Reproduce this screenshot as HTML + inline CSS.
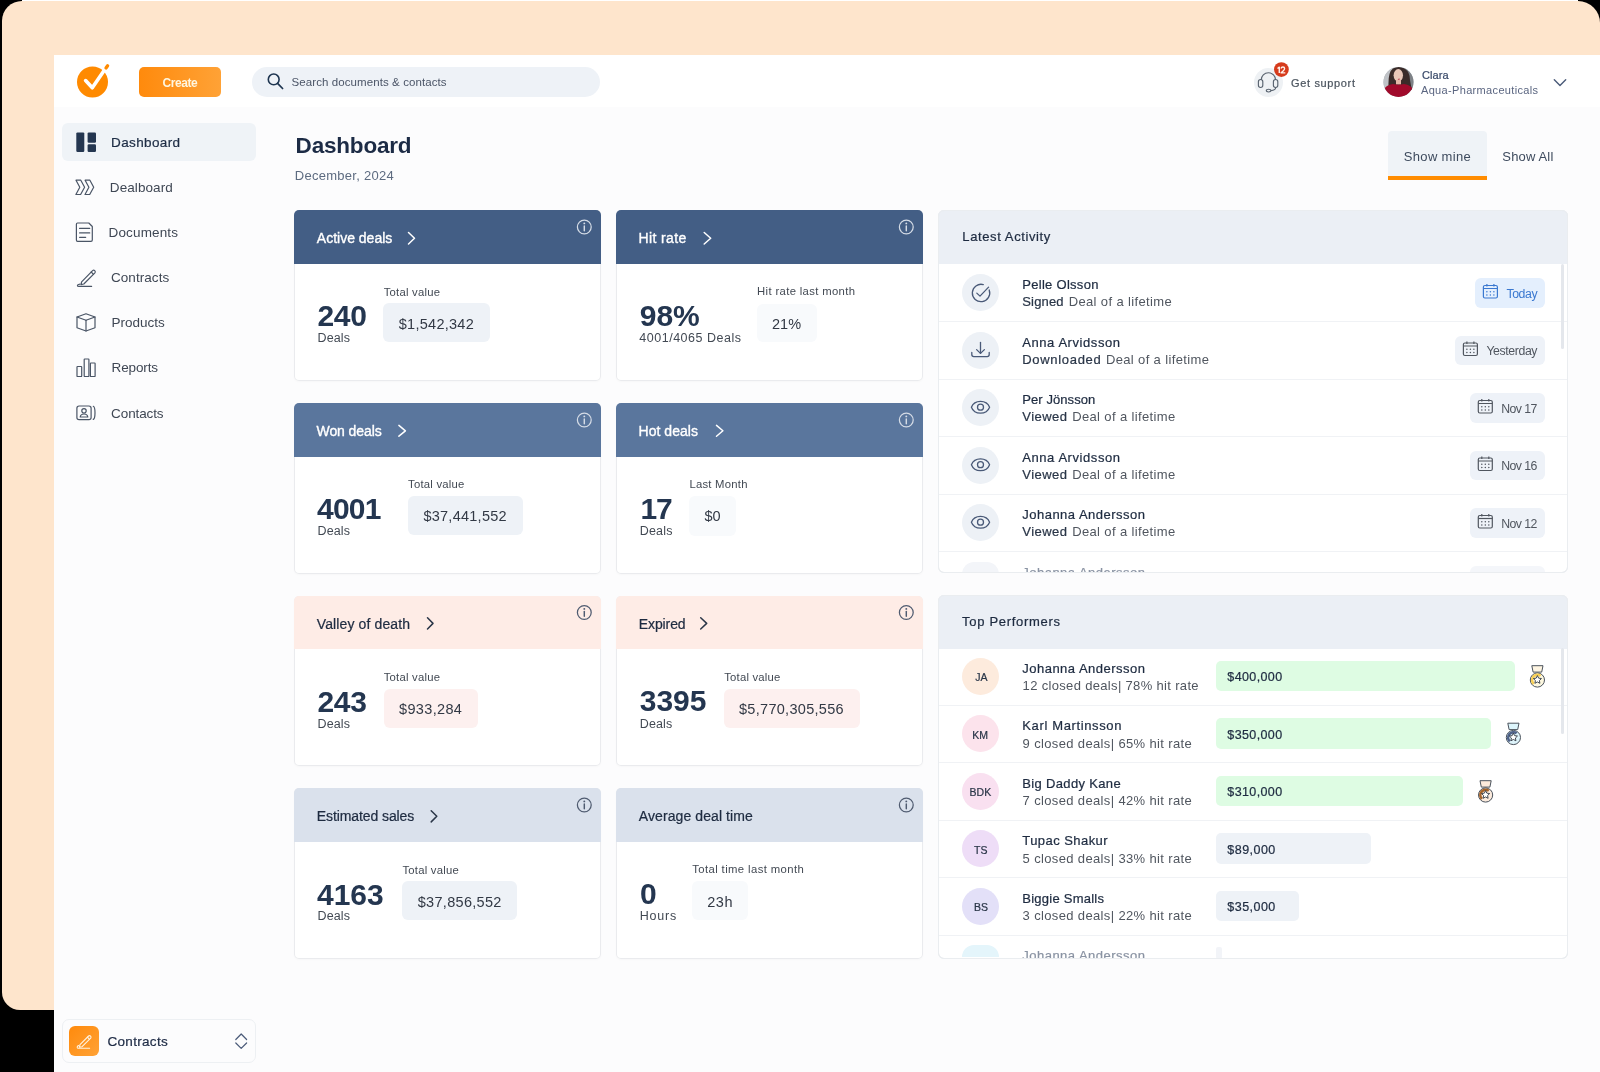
<!DOCTYPE html><html><head><meta charset="utf-8"><title>Dashboard</title><style>
html,body{margin:0;padding:0}
body{width:1600px;height:1072px;overflow:hidden;position:relative;background:#000;font-family:"Liberation Sans",sans-serif}
</style></head><body><div id="root" style="position:absolute;left:0;top:0;width:1600px;height:1072px;overflow:hidden;will-change:transform">
<div style="position:absolute;left:22.00px;top:0.00px;width:1556.00px;height:1.00px;background:#FFFFFF;border-radius:0px;"></div>
<div style="position:absolute;left:2.00px;top:1.00px;width:1598.00px;height:1009.00px;background:#FEE5CC;border-radius:20px 22px 0 18px;"></div>
<div style="position:absolute;left:54.00px;top:55.00px;width:1546.00px;height:1017.00px;background:#FCFCFD;border-radius:0px;"></div>
<div style="position:absolute;left:54.00px;top:55.00px;width:1546.00px;height:52.00px;background:#FFFFFF;border-radius:0px;"></div>
<svg style="position:absolute;left:0;top:0;" width="1600" height="1072" viewBox="0 0 1600 1072" fill="none"><circle cx="92.5" cy="82" r="15.5" fill="#FF8A00"/>
<polyline points="85.6,80.6 92.3,87.8 103.6,71.2" stroke="#fff" stroke-width="3.6" stroke-linecap="round" stroke-linejoin="round"/>
<line x1="103.6" y1="71.2" x2="104.7" y2="69.6" stroke="#fff" stroke-width="3.6"/>
<line x1="106" y1="68" x2="107.6" y2="65.8" stroke="#FF8A00" stroke-width="3.3" stroke-linecap="round"/></svg>
<div style="position:absolute;left:139px;top:67px;width:82px;height:30px;border-radius:5px;background:linear-gradient(90deg,#FF8A0C,#FFA236)"></div>
<span style="position:absolute;left:162.50px;top:77.18px;font-size:12.00px;line-height:1;white-space:nowrap;color:#FFF6DF;font-weight:bold;letter-spacing:-0.416px;">Create</span>
<div style="position:absolute;left:252.00px;top:67.00px;width:348.00px;height:30.00px;background:#EEF2F7;border-radius:15px;"></div>
<svg style="position:absolute;left:0;top:0;" width="1600" height="1072" viewBox="0 0 1600 1072" fill="none"><circle cx="273.7" cy="79.4" r="5.4" stroke="#1E3550" stroke-width="1.6"/>
<line x1="277.6" y1="83.4" x2="282.6" y2="88.5" stroke="#1E3550" stroke-width="1.7" stroke-linecap="round"/></svg>
<span style="position:absolute;left:291.60px;top:77.40px;font-size:11.50px;line-height:1;white-space:nowrap;color:#4B5567;letter-spacing:0.085px;">Search documents &amp; contacts</span>
<div style="position:absolute;left:1253.5px;top:67.5px;width:29px;height:29px;border-radius:50%;background:#EEF1F4"></div>
<svg style="position:absolute;left:0;top:0;" width="1600" height="1072" viewBox="0 0 1600 1072" fill="none"><path d="M1261.2 80 A7.2 7.2 0 0 1 1275.6 80" stroke="#5A6470" stroke-width="1.15"/>
<rect x="1258.4" y="79.5" width="4.4" height="8" rx="2.2" stroke="#5A6470" stroke-width="1.15"/>
<rect x="1273.4" y="79.5" width="4.4" height="8" rx="2.2" stroke="#5A6470" stroke-width="1.15"/>
<path d="M1275.8 87.3 Q1275.5 90.6 1271 90.6" stroke="#5A6470" stroke-width="1.1"/>
<ellipse cx="1268.6" cy="90.6" rx="2.3" ry="1.35" stroke="#5A6470" stroke-width="1.1"/>
<circle cx="1281.4" cy="69.6" r="7.4" fill="#D63B1C"/>
<path d="M1277.5 68.5 L1279.3 67.2 V72.9" stroke="#FFF1EA" stroke-width="1.45" fill="none" stroke-linejoin="round"/>
<path d="M1281 68.5 Q1281.3 67 1282.9 67 Q1284.6 67 1284.6 68.6 Q1284.6 69.6 1283.4 70.7 L1281.1 72.8 H1285.3" stroke="#FFF1EA" stroke-width="1.35" fill="none" stroke-linejoin="round"/></svg>
<span style="position:absolute;left:1291.00px;top:77.81px;font-size:11.00px;line-height:1;white-space:nowrap;color:#4D5660;-webkit-text-stroke:0.22px #4D5660;letter-spacing:0.652px;">Get support</span>
<svg style="position:absolute;left:0;top:0;" width="1600" height="1072" viewBox="0 0 1600 1072" fill="none"><defs><clipPath id="av"><circle cx="1398.5" cy="82" r="15"/></clipPath></defs>
<g clip-path="url(#av)">
<rect x="1383" y="66" width="31" height="32" fill="#A4A8AD"/>
<rect x="1383" y="66" width="9" height="32" fill="#BFC2C6"/>
<rect x="1405" y="66" width="9" height="32" fill="#7E8287"/>
<path d="M1388.5 86 Q1388 72 1393 68.5 Q1399 65.5 1404.5 68.5 Q1410 72 1410 80 Q1411 86 1412 90 L1386 90 Z" fill="#3A2B29"/>
<ellipse cx="1398.3" cy="75.3" rx="4.7" ry="6.2" fill="#E9C7B8"/>
<rect x="1396" y="80" width="5" height="4.5" fill="#E3B9A8"/>
<path d="M1398.2 78.8 Q1398.5 79.8 1399.6 78.8" stroke="#C0505E" stroke-width="1.2"/>
<path d="M1383 98 V91 Q1386 84.5 1393 84 Q1398.5 85.5 1404 84 Q1411.5 85 1414 91 V98 Z" fill="#A00A2B"/>
</g></svg>
<span style="position:absolute;left:1422.00px;top:70.22px;font-size:11.00px;line-height:1;white-space:nowrap;color:#3A4A6A;-webkit-text-stroke:0.22px #3A4A6A;letter-spacing:0.114px;">Clara</span>
<span style="position:absolute;left:1421.00px;top:85.22px;font-size:11.00px;line-height:1;white-space:nowrap;color:#5A6580;letter-spacing:0.334px;">Aqua-Pharmaceuticals</span>
<svg style="position:absolute;left:0;top:0;" width="1600" height="1072" viewBox="0 0 1600 1072" fill="none"><polyline points="1554.3,79.8 1560,85.5 1565.7,79.8" stroke="#4A5A78" stroke-width="1.4" stroke-linecap="round" stroke-linejoin="round"/></svg>
<div style="position:absolute;left:62.00px;top:123.00px;width:194.00px;height:38.00px;background:#EFF3F7;border-radius:6px;"></div>
<svg style="position:absolute;left:0;top:0;" width="1600" height="1072" viewBox="0 0 1600 1072" fill="none"><rect x="76.3" y="132.4" width="8" height="19.5" rx="1.2" fill="#243650"/>
<rect x="87.6" y="132.4" width="8.4" height="10.4" rx="1.2" fill="#243650"/>
<rect x="87.6" y="144.2" width="8.4" height="7.7" rx="1.2" fill="#243650"/></svg>
<span style="position:absolute;left:111.10px;top:135.83px;font-size:13.50px;line-height:1;white-space:nowrap;color:#1E2D45;-webkit-text-stroke:0.22px #1E2D45;letter-spacing:0.373px;">Dashboard</span>
<span style="position:absolute;left:109.80px;top:181.13px;font-size:13.50px;line-height:1;white-space:nowrap;color:#3F4754;letter-spacing:0.087px;">Dealboard</span>
<span style="position:absolute;left:108.60px;top:226.03px;font-size:13.50px;line-height:1;white-space:nowrap;color:#3F4754;letter-spacing:0.136px;">Documents</span>
<span style="position:absolute;left:111.00px;top:271.13px;font-size:13.50px;line-height:1;white-space:nowrap;color:#3F4754;letter-spacing:0.053px;">Contracts</span>
<span style="position:absolute;left:111.50px;top:316.33px;font-size:13.50px;line-height:1;white-space:nowrap;color:#3F4754;">Products</span>
<span style="position:absolute;left:111.50px;top:361.43px;font-size:13.50px;line-height:1;white-space:nowrap;color:#3F4754;letter-spacing:-0.108px;">Reports</span>
<span style="position:absolute;left:111.10px;top:406.53px;font-size:13.50px;line-height:1;white-space:nowrap;color:#3F4754;letter-spacing:-0.108px;">Contacts</span>
<svg style="position:absolute;left:0;top:0;" width="1600" height="1072" viewBox="0 0 1600 1072" fill="none"><g stroke="#4A5566" stroke-width="1.2" stroke-linejoin="round" stroke-linecap="round">
<path d="M76 180.2 H80.8 L84.6 187.3 L80.6 194.5 H75.9 L79.8 187.3 Z"/>
<path d="M85.1 180.2 H89.9 L93.7 187.3 L89.7 194.5 H85 L88.9 187.3 Z"/>
<path d="M77.5 223 H88.8 L92.3 226.5 V240 Q92.3 241.3 91 241.3 H77.5 Q76.4 241.3 76.4 240 V224.3 Q76.4 223 77.5 223 Z"/>
<line x1="79.6" y1="228.4" x2="89.7" y2="228.4"/><line x1="79.6" y1="232.9" x2="89.7" y2="232.9"/><line x1="79.6" y1="237.3" x2="85.7" y2="237.3"/>
<path d="M81.6 281.8 L92.6 270.6 A1.6 1.6 0 0 1 94.9 272.8 L83.8 284 L81 284.6 Z"/>
<line x1="91.2" y1="272" x2="93.5" y2="274.3"/>
<path d="M80 284.2 Q77.4 284.6 77.4 285.5 Q77.4 286.4 79 286.4 H91.6"/>
<path d="M86 313.8 L95 317 V327.8 L86 331 L77 327.8 V317 Z"/><path d="M77 317 L86 320.3 L95 317"/><line x1="86" y1="320.3" x2="86" y2="331"/>
<rect x="77" y="366.5" width="4.7" height="10" rx="0.6"/><rect x="84.2" y="359" width="4.7" height="17.5" rx="0.6"/><rect x="90.4" y="363" width="4.7" height="13.5" rx="0.6"/>
<rect x="76.9" y="406" width="14.2" height="13.7" rx="2.2"/>
<path d="M93.3 406.3 Q95 407 95 412.8 Q95 418.7 93.3 419.4"/>
<circle cx="84" cy="410.8" r="2.2"/><path d="M80.2 417 Q80.6 414 84 414 Q87.4 414 87.8 417 Z"/>
</g></svg>
<span style="position:absolute;left:295.60px;top:134.61px;font-size:22.50px;line-height:1;white-space:nowrap;color:#1C2B45;font-weight:bold;letter-spacing:-0.195px;">Dashboard</span>
<span style="position:absolute;left:294.75px;top:168.84px;font-size:13.00px;line-height:1;white-space:nowrap;color:#5D6B80;letter-spacing:0.275px;">December, 2024</span>
<div style="position:absolute;left:1388px;top:131px;width:99px;height:45px;border-radius:4px 4px 0 0;background:#EFF3F7"></div>
<div style="position:absolute;left:1388.00px;top:176.00px;width:99.00px;height:3.80px;background:#FF8C00;border-radius:0px;"></div>
<span style="position:absolute;left:1403.75px;top:149.75px;font-size:13.00px;line-height:1;white-space:nowrap;color:#3E4B5E;letter-spacing:0.339px;">Show mine</span>
<span style="position:absolute;left:1502.30px;top:149.75px;font-size:13.00px;line-height:1;white-space:nowrap;color:#3E4B5E;letter-spacing:0.164px;">Show All</span>
<div style="position:absolute;left:294.00px;top:210.00px;width:307.2px;height:170.5px;border-radius:5px;background:#fff;box-shadow:inset 0 0 0 1px #EAEBEE,0 1px 2px rgba(0,0,0,0.025)"><div style="position:absolute;left:0;top:0;right:0;height:53.5px;border-radius:5px 5px 0 0;background:#435E85"></div></div>
<span style="position:absolute;left:316.80px;top:231.31px;font-size:14.00px;line-height:1;white-space:nowrap;color:#FFFFFF;-webkit-text-stroke:0.22px #FFFFFF;-webkit-text-stroke:0.35px #FFFFFF;">Active deals</span>
<svg style="position:absolute;left:0;top:0;" width="1600" height="1072" viewBox="0 0 1600 1072" fill="none"><polyline points="408.50,232.50 414.50,238.25 408.50,244.00" stroke="#FFFFFF" stroke-width="1.5" stroke-linecap="round" stroke-linejoin="round"/></svg>
<svg style="position:absolute;left:0;top:0;" width="1600" height="1072" viewBox="0 0 1600 1072" fill="none"><circle cx="584.30" cy="227.00" r="6.9" stroke="#D5DCE6" stroke-width="1.25"/><line x1="584.30" y1="226.00" x2="584.30" y2="230.70" stroke="#D5DCE6" stroke-width="1.45" stroke-linecap="round"/><circle cx="584.30" cy="223.40" r="0.95" fill="#D5DCE6"/></svg>
<span style="position:absolute;left:317.50px;top:301.20px;font-size:30.00px;line-height:1;white-space:nowrap;color:#243650;font-weight:bold;letter-spacing:-0.350px;">240</span>
<span style="position:absolute;left:317.50px;top:332.06px;font-size:12.50px;line-height:1;white-space:nowrap;color:#424953;letter-spacing:0.141px;">Deals</span>
<span style="position:absolute;left:383.75px;top:287.16px;font-size:11.30px;line-height:1;white-space:nowrap;color:#424953;letter-spacing:0.219px;">Total value</span>
<div style="position:absolute;left:383.00px;top:303.10px;width:107.00px;height:38.80px;background:#EEF2F7;border-radius:6px;"></div>
<span style="position:absolute;left:398.75px;top:316.64px;font-size:14.50px;line-height:1;white-space:nowrap;color:#323945;letter-spacing:0.270px;">$1,542,342</span>
<div style="position:absolute;left:616.00px;top:210.00px;width:307.2px;height:170.5px;border-radius:5px;background:#fff;box-shadow:inset 0 0 0 1px #EAEBEE,0 1px 2px rgba(0,0,0,0.025)"><div style="position:absolute;left:0;top:0;right:0;height:53.5px;border-radius:5px 5px 0 0;background:#435E85"></div></div>
<span style="position:absolute;left:638.50px;top:231.31px;font-size:14.00px;line-height:1;white-space:nowrap;color:#FFFFFF;-webkit-text-stroke:0.22px #FFFFFF;letter-spacing:0.364px;-webkit-text-stroke:0.35px #FFFFFF;">Hit rate</span>
<svg style="position:absolute;left:0;top:0;" width="1600" height="1072" viewBox="0 0 1600 1072" fill="none"><polyline points="704.20,232.50 710.70,238.25 704.20,244.00" stroke="#FFFFFF" stroke-width="1.5" stroke-linecap="round" stroke-linejoin="round"/></svg>
<svg style="position:absolute;left:0;top:0;" width="1600" height="1072" viewBox="0 0 1600 1072" fill="none"><circle cx="906.30" cy="227.00" r="6.9" stroke="#D5DCE6" stroke-width="1.25"/><line x1="906.30" y1="226.00" x2="906.30" y2="230.70" stroke="#D5DCE6" stroke-width="1.45" stroke-linecap="round"/><circle cx="906.30" cy="223.40" r="0.95" fill="#D5DCE6"/></svg>
<span style="position:absolute;left:639.75px;top:300.65px;font-size:30.00px;line-height:1;white-space:nowrap;color:#243650;font-weight:bold;">98%</span>
<span style="position:absolute;left:639.30px;top:331.76px;font-size:12.50px;line-height:1;white-space:nowrap;color:#424953;letter-spacing:0.514px;">4001/4065 Deals</span>
<span style="position:absolute;left:757.10px;top:286.26px;font-size:11.30px;line-height:1;white-space:nowrap;color:#424953;letter-spacing:0.344px;">Hit rate last month</span>
<div style="position:absolute;left:756.70px;top:304.00px;width:60.00px;height:37.50px;background:#F8FAFC;border-radius:6px;"></div>
<span style="position:absolute;left:772.00px;top:316.59px;font-size:14.50px;line-height:1;white-space:nowrap;color:#323945;">21%</span>
<div style="position:absolute;left:294.00px;top:403.00px;width:307.2px;height:170.5px;border-radius:5px;background:#fff;box-shadow:inset 0 0 0 1px #EAEBEE,0 1px 2px rgba(0,0,0,0.025)"><div style="position:absolute;left:0;top:0;right:0;height:53.5px;border-radius:5px 5px 0 0;background:#5A769D"></div></div>
<span style="position:absolute;left:316.50px;top:424.31px;font-size:14.00px;line-height:1;white-space:nowrap;color:#FFFFFF;-webkit-text-stroke:0.22px #FFFFFF;letter-spacing:-0.084px;-webkit-text-stroke:0.35px #FFFFFF;">Won deals</span>
<svg style="position:absolute;left:0;top:0;" width="1600" height="1072" viewBox="0 0 1600 1072" fill="none"><polyline points="398.90,425.40 405.40,430.80 398.90,436.20" stroke="#FFFFFF" stroke-width="1.5" stroke-linecap="round" stroke-linejoin="round"/></svg>
<svg style="position:absolute;left:0;top:0;" width="1600" height="1072" viewBox="0 0 1600 1072" fill="none"><circle cx="584.30" cy="420.00" r="6.9" stroke="#D5DCE6" stroke-width="1.25"/><line x1="584.30" y1="419.00" x2="584.30" y2="423.70" stroke="#D5DCE6" stroke-width="1.45" stroke-linecap="round"/><circle cx="584.30" cy="416.40" r="0.95" fill="#D5DCE6"/></svg>
<span style="position:absolute;left:317.00px;top:494.45px;font-size:30.00px;line-height:1;white-space:nowrap;color:#243650;font-weight:bold;letter-spacing:-0.750px;">4001</span>
<span style="position:absolute;left:317.50px;top:524.76px;font-size:12.50px;line-height:1;white-space:nowrap;color:#424953;letter-spacing:0.141px;">Deals</span>
<span style="position:absolute;left:408.10px;top:478.86px;font-size:11.30px;line-height:1;white-space:nowrap;color:#424953;letter-spacing:0.219px;">Total value</span>
<div style="position:absolute;left:408.00px;top:495.80px;width:115.00px;height:39.00px;background:#EEF2F7;border-radius:6px;"></div>
<span style="position:absolute;left:423.40px;top:508.89px;font-size:14.50px;line-height:1;white-space:nowrap;color:#323945;letter-spacing:0.258px;">$37,441,552</span>
<div style="position:absolute;left:616.00px;top:403.00px;width:307.2px;height:170.5px;border-radius:5px;background:#fff;box-shadow:inset 0 0 0 1px #EAEBEE,0 1px 2px rgba(0,0,0,0.025)"><div style="position:absolute;left:0;top:0;right:0;height:53.5px;border-radius:5px 5px 0 0;background:#5A769D"></div></div>
<span style="position:absolute;left:638.50px;top:424.31px;font-size:14.00px;line-height:1;white-space:nowrap;color:#FFFFFF;-webkit-text-stroke:0.22px #FFFFFF;letter-spacing:0.044px;-webkit-text-stroke:0.35px #FFFFFF;">Hot deals</span>
<svg style="position:absolute;left:0;top:0;" width="1600" height="1072" viewBox="0 0 1600 1072" fill="none"><polyline points="716.50,425.40 722.90,430.80 716.50,436.20" stroke="#FFFFFF" stroke-width="1.5" stroke-linecap="round" stroke-linejoin="round"/></svg>
<svg style="position:absolute;left:0;top:0;" width="1600" height="1072" viewBox="0 0 1600 1072" fill="none"><circle cx="906.30" cy="420.00" r="6.9" stroke="#D5DCE6" stroke-width="1.25"/><line x1="906.30" y1="419.00" x2="906.30" y2="423.70" stroke="#D5DCE6" stroke-width="1.45" stroke-linecap="round"/><circle cx="906.30" cy="416.40" r="0.95" fill="#D5DCE6"/></svg>
<span style="position:absolute;left:640.60px;top:494.35px;font-size:30.00px;line-height:1;white-space:nowrap;color:#243650;font-weight:bold;letter-spacing:-1.400px;">17</span>
<span style="position:absolute;left:639.75px;top:524.81px;font-size:12.50px;line-height:1;white-space:nowrap;color:#424953;letter-spacing:0.191px;">Deals</span>
<span style="position:absolute;left:689.40px;top:479.31px;font-size:11.30px;line-height:1;white-space:nowrap;color:#424953;letter-spacing:0.247px;">Last Month</span>
<div style="position:absolute;left:688.75px;top:495.60px;width:47.50px;height:40.00px;background:#F8FAFC;border-radius:6px;"></div>
<span style="position:absolute;left:704.40px;top:509.14px;font-size:14.50px;line-height:1;white-space:nowrap;color:#323945;letter-spacing:0.105px;">$0</span>
<div style="position:absolute;left:294.00px;top:595.50px;width:307.2px;height:170.5px;border-radius:5px;background:#fff;box-shadow:inset 0 0 0 1px #EAEBEE,0 1px 2px rgba(0,0,0,0.025)"><div style="position:absolute;left:0;top:0;right:0;height:53.5px;border-radius:5px 5px 0 0;background:#FEECE6"></div></div>
<span style="position:absolute;left:316.80px;top:616.81px;font-size:14.00px;line-height:1;white-space:nowrap;color:#1E2B40;-webkit-text-stroke:0.22px #1E2B40;letter-spacing:0.117px;">Valley of death</span>
<svg style="position:absolute;left:0;top:0;" width="1600" height="1072" viewBox="0 0 1600 1072" fill="none"><polyline points="427.50,617.80 433.00,623.40 427.50,629.00" stroke="#2A3648" stroke-width="1.5" stroke-linecap="round" stroke-linejoin="round"/></svg>
<svg style="position:absolute;left:0;top:0;" width="1600" height="1072" viewBox="0 0 1600 1072" fill="none"><circle cx="584.30" cy="612.50" r="6.9" stroke="#4F5B70" stroke-width="1.25"/><line x1="584.30" y1="611.50" x2="584.30" y2="616.20" stroke="#4F5B70" stroke-width="1.45" stroke-linecap="round"/><circle cx="584.30" cy="608.90" r="0.95" fill="#4F5B70"/></svg>
<span style="position:absolute;left:317.50px;top:686.85px;font-size:30.00px;line-height:1;white-space:nowrap;color:#243650;font-weight:bold;letter-spacing:-0.350px;">243</span>
<span style="position:absolute;left:317.50px;top:717.56px;font-size:12.50px;line-height:1;white-space:nowrap;color:#424953;letter-spacing:0.141px;">Deals</span>
<span style="position:absolute;left:383.75px;top:671.81px;font-size:11.30px;line-height:1;white-space:nowrap;color:#424953;letter-spacing:0.219px;">Total value</span>
<div style="position:absolute;left:383.50px;top:688.75px;width:94.50px;height:39.25px;background:#FDF0EF;border-radius:6px;"></div>
<span style="position:absolute;left:399.00px;top:702.29px;font-size:14.50px;line-height:1;white-space:nowrap;color:#323945;letter-spacing:0.348px;">$933,284</span>
<div style="position:absolute;left:616.00px;top:595.50px;width:307.2px;height:170.5px;border-radius:5px;background:#fff;box-shadow:inset 0 0 0 1px #EAEBEE,0 1px 2px rgba(0,0,0,0.025)"><div style="position:absolute;left:0;top:0;right:0;height:53.5px;border-radius:5px 5px 0 0;background:#FEECE6"></div></div>
<span style="position:absolute;left:638.80px;top:616.81px;font-size:14.00px;line-height:1;white-space:nowrap;color:#1E2B40;-webkit-text-stroke:0.22px #1E2B40;letter-spacing:-0.110px;">Expired</span>
<svg style="position:absolute;left:0;top:0;" width="1600" height="1072" viewBox="0 0 1600 1072" fill="none"><polyline points="700.70,617.80 706.70,623.40 700.70,629.00" stroke="#2A3648" stroke-width="1.5" stroke-linecap="round" stroke-linejoin="round"/></svg>
<svg style="position:absolute;left:0;top:0;" width="1600" height="1072" viewBox="0 0 1600 1072" fill="none"><circle cx="906.30" cy="612.50" r="6.9" stroke="#4F5B70" stroke-width="1.25"/><line x1="906.30" y1="611.50" x2="906.30" y2="616.20" stroke="#4F5B70" stroke-width="1.45" stroke-linecap="round"/><circle cx="906.30" cy="608.90" r="0.95" fill="#4F5B70"/></svg>
<span style="position:absolute;left:639.75px;top:685.95px;font-size:30.00px;line-height:1;white-space:nowrap;color:#243650;font-weight:bold;">3395</span>
<span style="position:absolute;left:639.75px;top:717.76px;font-size:12.50px;line-height:1;white-space:nowrap;color:#424953;letter-spacing:0.141px;">Deals</span>
<span style="position:absolute;left:724.20px;top:671.56px;font-size:11.30px;line-height:1;white-space:nowrap;color:#424953;letter-spacing:0.219px;">Total value</span>
<div style="position:absolute;left:723.70px;top:688.50px;width:136.30px;height:39.00px;background:#FDF0EF;border-radius:6px;"></div>
<span style="position:absolute;left:739.00px;top:701.89px;font-size:14.50px;line-height:1;white-space:nowrap;color:#323945;letter-spacing:0.294px;">$5,770,305,556</span>
<div style="position:absolute;left:294.00px;top:788.00px;width:307.2px;height:170.5px;border-radius:5px;background:#fff;box-shadow:inset 0 0 0 1px #EAEBEE,0 1px 2px rgba(0,0,0,0.025)"><div style="position:absolute;left:0;top:0;right:0;height:53.5px;border-radius:5px 5px 0 0;background:#DAE1EC"></div></div>
<span style="position:absolute;left:316.80px;top:809.31px;font-size:14.00px;line-height:1;white-space:nowrap;color:#1E2B40;-webkit-text-stroke:0.22px #1E2B40;letter-spacing:-0.096px;">Estimated sales</span>
<svg style="position:absolute;left:0;top:0;" width="1600" height="1072" viewBox="0 0 1600 1072" fill="none"><polyline points="431.20,810.70 436.80,816.30 431.20,821.90" stroke="#2A3648" stroke-width="1.5" stroke-linecap="round" stroke-linejoin="round"/></svg>
<svg style="position:absolute;left:0;top:0;" width="1600" height="1072" viewBox="0 0 1600 1072" fill="none"><circle cx="584.30" cy="805.00" r="6.9" stroke="#4F5B70" stroke-width="1.25"/><line x1="584.30" y1="804.00" x2="584.30" y2="808.70" stroke="#4F5B70" stroke-width="1.45" stroke-linecap="round"/><circle cx="584.30" cy="801.40" r="0.95" fill="#4F5B70"/></svg>
<span style="position:absolute;left:317.00px;top:879.65px;font-size:30.00px;line-height:1;white-space:nowrap;color:#243650;font-weight:bold;letter-spacing:-0.017px;">4163</span>
<span style="position:absolute;left:317.50px;top:910.06px;font-size:12.50px;line-height:1;white-space:nowrap;color:#424953;letter-spacing:0.141px;">Deals</span>
<span style="position:absolute;left:402.50px;top:864.56px;font-size:11.30px;line-height:1;white-space:nowrap;color:#424953;letter-spacing:0.219px;">Total value</span>
<div style="position:absolute;left:402.20px;top:880.70px;width:114.80px;height:39.00px;background:#EEF2F7;border-radius:6px;"></div>
<span style="position:absolute;left:417.70px;top:894.89px;font-size:14.50px;line-height:1;white-space:nowrap;color:#323945;letter-spacing:0.308px;">$37,856,552</span>
<div style="position:absolute;left:616.00px;top:788.00px;width:307.2px;height:170.5px;border-radius:5px;background:#fff;box-shadow:inset 0 0 0 1px #EAEBEE,0 1px 2px rgba(0,0,0,0.025)"><div style="position:absolute;left:0;top:0;right:0;height:53.5px;border-radius:5px 5px 0 0;background:#DAE1EC"></div></div>
<span style="position:absolute;left:638.80px;top:809.31px;font-size:14.00px;line-height:1;white-space:nowrap;color:#1E2B40;-webkit-text-stroke:0.22px #1E2B40;letter-spacing:0.090px;">Average deal time</span>
<svg style="position:absolute;left:0;top:0;" width="1600" height="1072" viewBox="0 0 1600 1072" fill="none"><circle cx="906.30" cy="805.00" r="6.9" stroke="#4F5B70" stroke-width="1.25"/><line x1="906.30" y1="804.00" x2="906.30" y2="808.70" stroke="#4F5B70" stroke-width="1.45" stroke-linecap="round"/><circle cx="906.30" cy="801.40" r="0.95" fill="#4F5B70"/></svg>
<span style="position:absolute;left:640.00px;top:879.35px;font-size:30.00px;line-height:1;white-space:nowrap;color:#243650;font-weight:bold;">0</span>
<span style="position:absolute;left:639.75px;top:910.16px;font-size:12.50px;line-height:1;white-space:nowrap;color:#424953;letter-spacing:0.781px;">Hours</span>
<span style="position:absolute;left:692.25px;top:864.31px;font-size:11.30px;line-height:1;white-space:nowrap;color:#424953;letter-spacing:0.394px;">Total time last month</span>
<div style="position:absolute;left:691.90px;top:880.60px;width:56.10px;height:39.40px;background:#F8FAFC;border-radius:6px;"></div>
<span style="position:absolute;left:707.25px;top:894.79px;font-size:14.50px;line-height:1;white-space:nowrap;color:#323945;letter-spacing:0.518px;">23h</span>
<div style="position:absolute;left:938.00px;top:209.50px;width:630px;height:363.50px;border-radius:6px;background:#fff;box-shadow:inset 0 0 0 1px #EAEDF0"><div style="position:absolute;left:0;top:0;right:0;height:54.00px;border-radius:6px 6px 0 0;background:#EBEFF5"></div></div>
<span style="position:absolute;left:962.30px;top:230.15px;font-size:13.00px;line-height:1;white-space:nowrap;color:#1E2B40;-webkit-text-stroke:0.22px #1E2B40;letter-spacing:0.607px;">Latest Activity</span>
<div style="position:absolute;left:0;top:0;width:1600px;height:1072px;clip-path:inset(263.5px 32px 499px 938px round 0 0 6px 6px)">
<div style="position:absolute;left:939.00px;top:321.00px;width:628px;height:1px;background:#F0F2F5"></div>
<div style="position:absolute;left:961.5px;top:274.00px;width:37px;height:37px;border-radius:50%;background:#EDF1F6"></div>
<svg style="position:absolute;left:0;top:0;" width="1600" height="1072" viewBox="0 0 1600 1072" fill="none"><g stroke="#4A5A78" stroke-width="1.3" stroke-linecap="round" stroke-linejoin="round"><path d="M989.2 290.00 A8.7 8.7 0 1 1 983.3 284.60"/><polyline points="976.8,293.10 980,296.10 988.6,287.10"/></g></svg>
<span style="position:absolute;left:1022.30px;top:278.14px;font-size:13.00px;line-height:1;white-space:nowrap;color:#1E2B40;-webkit-text-stroke:0.22px #1E2B40;letter-spacing:0.282px;">Pelle Olsson</span>
<span style="position:absolute;left:1022.30px;top:295.14px;font-size:13.00px;line-height:1;white-space:nowrap;color:#2A3648;-webkit-text-stroke:0.22px #2A3648;letter-spacing:0.141px;">Signed</span>
<span style="position:absolute;left:1068.70px;top:295.14px;font-size:13.00px;line-height:1;white-space:nowrap;color:#50565F;letter-spacing:0.362px;">Deal of a lifetime</span>
<div style="position:absolute;left:1475.40px;top:278.00px;width:69.60px;height:29.50px;background:#E4EFFD;border-radius:6px;"></div>
<svg style="position:absolute;left:0;top:0;" width="1600" height="1072" viewBox="0 0 1600 1072" fill="none"><g stroke="#3A78D0" stroke-width="1.2" fill="none"><rect x="1483.40" y="285.50" width="14" height="12.5" rx="1.5"/><line x1="1483.40" y1="288.50" x2="1497.40" y2="288.50"/><line x1="1486.90" y1="284.00" x2="1486.90" y2="286.50"/><line x1="1493.90" y1="284.00" x2="1493.90" y2="286.50"/></g><g fill="#3A78D0"><circle cx="1486.90" cy="291.70" r="0.75"/><circle cx="1490.40" cy="291.70" r="0.75"/><circle cx="1493.90" cy="291.70" r="0.75"/><circle cx="1486.90" cy="295.00" r="0.75"/><circle cx="1490.40" cy="295.00" r="0.75"/><circle cx="1493.90" cy="295.00" r="0.75"/></g></svg>
<span style="position:absolute;left:1506.40px;top:287.73px;font-size:12.30px;line-height:1;white-space:nowrap;color:#3A78D0;letter-spacing:-0.385px;">Today</span>
<div style="position:absolute;left:939.00px;top:378.50px;width:628px;height:1px;background:#F0F2F5"></div>
<div style="position:absolute;left:961.5px;top:331.50px;width:37px;height:37px;border-radius:50%;background:#EDF1F6"></div>
<svg style="position:absolute;left:0;top:0;" width="1600" height="1072" viewBox="0 0 1600 1072" fill="none"><g stroke="#4A5A78" stroke-width="1.3" stroke-linecap="round" stroke-linejoin="round"><line x1="980.5" y1="342.40" x2="980.5" y2="353.40"/><polyline points="976.6,349.60 980.5,353.40 984.4,349.60"/><path d="M971.8 352.40 V354.60 Q971.8 356.60 973.8 356.60 H987.2 Q989.2 356.60 989.2 354.60 V352.40"/></g></svg>
<span style="position:absolute;left:1022.30px;top:335.64px;font-size:13.00px;line-height:1;white-space:nowrap;color:#1E2B40;-webkit-text-stroke:0.22px #1E2B40;letter-spacing:0.565px;">Anna Arvidsson</span>
<span style="position:absolute;left:1022.30px;top:352.64px;font-size:13.00px;line-height:1;white-space:nowrap;color:#2A3648;-webkit-text-stroke:0.22px #2A3648;letter-spacing:0.680px;">Downloaded</span>
<span style="position:absolute;left:1105.90px;top:352.64px;font-size:13.00px;line-height:1;white-space:nowrap;color:#50565F;letter-spacing:0.362px;">Deal of a lifetime</span>
<div style="position:absolute;left:1455.40px;top:335.50px;width:89.60px;height:29.50px;background:#EEF2F8;border-radius:6px;"></div>
<svg style="position:absolute;left:0;top:0;" width="1600" height="1072" viewBox="0 0 1600 1072" fill="none"><g stroke="#50565F" stroke-width="1.2" fill="none"><rect x="1463.40" y="343.00" width="14" height="12.5" rx="1.5"/><line x1="1463.40" y1="346.00" x2="1477.40" y2="346.00"/><line x1="1466.90" y1="341.50" x2="1466.90" y2="344.00"/><line x1="1473.90" y1="341.50" x2="1473.90" y2="344.00"/></g><g fill="#50565F"><circle cx="1466.90" cy="349.20" r="0.75"/><circle cx="1470.40" cy="349.20" r="0.75"/><circle cx="1473.90" cy="349.20" r="0.75"/><circle cx="1466.90" cy="352.50" r="0.75"/><circle cx="1470.40" cy="352.50" r="0.75"/><circle cx="1473.90" cy="352.50" r="0.75"/></g></svg>
<span style="position:absolute;left:1486.40px;top:345.23px;font-size:12.30px;line-height:1;white-space:nowrap;color:#50565F;letter-spacing:-0.393px;">Yesterday</span>
<div style="position:absolute;left:939.00px;top:436.00px;width:628px;height:1px;background:#F0F2F5"></div>
<div style="position:absolute;left:961.5px;top:389.00px;width:37px;height:37px;border-radius:50%;background:#EDF1F6"></div>
<svg style="position:absolute;left:0;top:0;" width="1600" height="1072" viewBox="0 0 1600 1072" fill="none"><g stroke="#4A5A78" stroke-width="1.3" stroke-linecap="round" stroke-linejoin="round" stroke-width="1.15"><path d="M971.4 407.20 C974.5 399.30 986.5 399.30 989.6 407.20 C986.5 415.10 974.5 415.10 971.4 407.20 Z"/><circle cx="980.5" cy="407.20" r="3"/></g></svg>
<span style="position:absolute;left:1022.30px;top:393.14px;font-size:13.00px;line-height:1;white-space:nowrap;color:#1E2B40;-webkit-text-stroke:0.22px #1E2B40;letter-spacing:0.072px;">Per Jönsson</span>
<span style="position:absolute;left:1022.30px;top:410.14px;font-size:13.00px;line-height:1;white-space:nowrap;color:#2A3648;-webkit-text-stroke:0.22px #2A3648;letter-spacing:0.464px;">Viewed</span>
<span style="position:absolute;left:1072.20px;top:410.14px;font-size:13.00px;line-height:1;white-space:nowrap;color:#50565F;letter-spacing:0.362px;">Deal of a lifetime</span>
<div style="position:absolute;left:1470.30px;top:393.00px;width:74.70px;height:29.50px;background:#EEF2F8;border-radius:6px;"></div>
<svg style="position:absolute;left:0;top:0;" width="1600" height="1072" viewBox="0 0 1600 1072" fill="none"><g stroke="#50565F" stroke-width="1.2" fill="none"><rect x="1478.30" y="400.50" width="14" height="12.5" rx="1.5"/><line x1="1478.30" y1="403.50" x2="1492.30" y2="403.50"/><line x1="1481.80" y1="399.00" x2="1481.80" y2="401.50"/><line x1="1488.80" y1="399.00" x2="1488.80" y2="401.50"/></g><g fill="#50565F"><circle cx="1481.80" cy="406.70" r="0.75"/><circle cx="1485.30" cy="406.70" r="0.75"/><circle cx="1488.80" cy="406.70" r="0.75"/><circle cx="1481.80" cy="410.00" r="0.75"/><circle cx="1485.30" cy="410.00" r="0.75"/><circle cx="1488.80" cy="410.00" r="0.75"/></g></svg>
<span style="position:absolute;left:1501.30px;top:402.73px;font-size:12.30px;line-height:1;white-space:nowrap;color:#50565F;letter-spacing:-0.598px;">Nov 17</span>
<div style="position:absolute;left:939.00px;top:493.50px;width:628px;height:1px;background:#F0F2F5"></div>
<div style="position:absolute;left:961.5px;top:446.50px;width:37px;height:37px;border-radius:50%;background:#EDF1F6"></div>
<svg style="position:absolute;left:0;top:0;" width="1600" height="1072" viewBox="0 0 1600 1072" fill="none"><g stroke="#4A5A78" stroke-width="1.3" stroke-linecap="round" stroke-linejoin="round" stroke-width="1.15"><path d="M971.4 464.70 C974.5 456.80 986.5 456.80 989.6 464.70 C986.5 472.60 974.5 472.60 971.4 464.70 Z"/><circle cx="980.5" cy="464.70" r="3"/></g></svg>
<span style="position:absolute;left:1022.30px;top:450.64px;font-size:13.00px;line-height:1;white-space:nowrap;color:#1E2B40;-webkit-text-stroke:0.22px #1E2B40;letter-spacing:0.565px;">Anna Arvidsson</span>
<span style="position:absolute;left:1022.30px;top:467.64px;font-size:13.00px;line-height:1;white-space:nowrap;color:#2A3648;-webkit-text-stroke:0.22px #2A3648;letter-spacing:0.464px;">Viewed</span>
<span style="position:absolute;left:1072.20px;top:467.64px;font-size:13.00px;line-height:1;white-space:nowrap;color:#50565F;letter-spacing:0.362px;">Deal of a lifetime</span>
<div style="position:absolute;left:1470.30px;top:450.50px;width:74.70px;height:29.50px;background:#EEF2F8;border-radius:6px;"></div>
<svg style="position:absolute;left:0;top:0;" width="1600" height="1072" viewBox="0 0 1600 1072" fill="none"><g stroke="#50565F" stroke-width="1.2" fill="none"><rect x="1478.30" y="458.00" width="14" height="12.5" rx="1.5"/><line x1="1478.30" y1="461.00" x2="1492.30" y2="461.00"/><line x1="1481.80" y1="456.50" x2="1481.80" y2="459.00"/><line x1="1488.80" y1="456.50" x2="1488.80" y2="459.00"/></g><g fill="#50565F"><circle cx="1481.80" cy="464.20" r="0.75"/><circle cx="1485.30" cy="464.20" r="0.75"/><circle cx="1488.80" cy="464.20" r="0.75"/><circle cx="1481.80" cy="467.50" r="0.75"/><circle cx="1485.30" cy="467.50" r="0.75"/><circle cx="1488.80" cy="467.50" r="0.75"/></g></svg>
<span style="position:absolute;left:1501.30px;top:460.23px;font-size:12.30px;line-height:1;white-space:nowrap;color:#50565F;letter-spacing:-0.598px;">Nov 16</span>
<div style="position:absolute;left:939.00px;top:551.00px;width:628px;height:1px;background:#F0F2F5"></div>
<div style="position:absolute;left:961.5px;top:504.00px;width:37px;height:37px;border-radius:50%;background:#EDF1F6"></div>
<svg style="position:absolute;left:0;top:0;" width="1600" height="1072" viewBox="0 0 1600 1072" fill="none"><g stroke="#4A5A78" stroke-width="1.3" stroke-linecap="round" stroke-linejoin="round" stroke-width="1.15"><path d="M971.4 522.20 C974.5 514.30 986.5 514.30 989.6 522.20 C986.5 530.10 974.5 530.10 971.4 522.20 Z"/><circle cx="980.5" cy="522.20" r="3"/></g></svg>
<span style="position:absolute;left:1022.30px;top:508.14px;font-size:13.00px;line-height:1;white-space:nowrap;color:#1E2B40;-webkit-text-stroke:0.22px #1E2B40;letter-spacing:0.480px;">Johanna Andersson</span>
<span style="position:absolute;left:1022.30px;top:525.14px;font-size:13.00px;line-height:1;white-space:nowrap;color:#2A3648;-webkit-text-stroke:0.22px #2A3648;letter-spacing:0.464px;">Viewed</span>
<span style="position:absolute;left:1072.20px;top:525.14px;font-size:13.00px;line-height:1;white-space:nowrap;color:#50565F;letter-spacing:0.362px;">Deal of a lifetime</span>
<div style="position:absolute;left:1470.30px;top:508.00px;width:74.70px;height:29.50px;background:#EEF2F8;border-radius:6px;"></div>
<svg style="position:absolute;left:0;top:0;" width="1600" height="1072" viewBox="0 0 1600 1072" fill="none"><g stroke="#50565F" stroke-width="1.2" fill="none"><rect x="1478.30" y="515.50" width="14" height="12.5" rx="1.5"/><line x1="1478.30" y1="518.50" x2="1492.30" y2="518.50"/><line x1="1481.80" y1="514.00" x2="1481.80" y2="516.50"/><line x1="1488.80" y1="514.00" x2="1488.80" y2="516.50"/></g><g fill="#50565F"><circle cx="1481.80" cy="521.70" r="0.75"/><circle cx="1485.30" cy="521.70" r="0.75"/><circle cx="1488.80" cy="521.70" r="0.75"/><circle cx="1481.80" cy="525.00" r="0.75"/><circle cx="1485.30" cy="525.00" r="0.75"/><circle cx="1488.80" cy="525.00" r="0.75"/></g></svg>
<span style="position:absolute;left:1501.30px;top:517.73px;font-size:12.30px;line-height:1;white-space:nowrap;color:#50565F;letter-spacing:-0.598px;">Nov 12</span>
<div style="position:absolute;left:961.5px;top:561.50px;width:37px;height:12px;border-radius:18.5px 18.5px 0 0;background:#F3F5F9"></div>
<span style="position:absolute;left:1022.30px;top:565.64px;font-size:13.00px;line-height:1;white-space:nowrap;color:#8A93A3;-webkit-text-stroke:0.22px #8A93A3;letter-spacing:0.480px;">Johanna Andersson</span>
<div style="position:absolute;left:1470.30px;top:565.50px;width:74.70px;height:8.00px;background:#F4F6FA;border-radius:6px 6px 0 0;"></div>
</div>
<div style="position:absolute;left:938px;top:209.5px;width:630px;height:363.5px;box-sizing:border-box;border:1px solid #EAEDF0;border-radius:6px"></div>
<div style="position:absolute;left:1560.60px;top:264.00px;width:3.50px;height:85.00px;background:#E4E7EC;border-radius:2px;"></div>
<div style="position:absolute;left:938.00px;top:594.50px;width:630px;height:364.00px;border-radius:6px;background:#fff;box-shadow:inset 0 0 0 1px #EAEDF0"><div style="position:absolute;left:0;top:0;right:0;height:54.00px;border-radius:6px 6px 0 0;background:#EBEFF5"></div></div>
<span style="position:absolute;left:962.00px;top:615.35px;font-size:13.00px;line-height:1;white-space:nowrap;color:#1E2B40;-webkit-text-stroke:0.22px #1E2B40;letter-spacing:0.703px;">Top Performers</span>
<div style="position:absolute;left:0;top:0;width:1600px;height:1072px;clip-path:inset(647.5px 32px 113.5px 938px round 0 0 6px 6px)">
<div style="position:absolute;left:939.00px;top:704.50px;width:628px;height:1px;background:#F0F2F5"></div>
<div style="position:absolute;left:962px;top:657.50px;width:37px;height:37px;border-radius:50%;background:#FDEBDD"></div>
<span style="position:absolute;left:975.25px;top:672.23px;font-size:10.50px;line-height:1;white-space:nowrap;color:#2A3648;-webkit-text-stroke:0.22px #2A3648;">JA</span>
<span style="position:absolute;left:1022.30px;top:661.64px;font-size:13.00px;line-height:1;white-space:nowrap;color:#1E2B40;-webkit-text-stroke:0.22px #1E2B40;letter-spacing:0.480px;">Johanna Andersson</span>
<span style="position:absolute;left:1022.60px;top:679.14px;font-size:13.00px;line-height:1;white-space:nowrap;color:#50565F;letter-spacing:0.331px;">12 closed deals| 78% hit rate</span>
<div style="position:absolute;left:1215.70px;top:660.80px;width:299.30px;height:30.50px;background:#DEFCE3;border-radius:5px;"></div>
<span style="position:absolute;left:1227.30px;top:671.16px;font-size:12.50px;line-height:1;white-space:nowrap;color:#1E2B40;-webkit-text-stroke:0.22px #1E2B40;letter-spacing:0.382px;">$400,000</span>
<svg style="position:absolute;left:0;top:0;" width="1600" height="1072" viewBox="0 0 1600 1072" fill="none"><path d="M1531.80 665.70 H1543.00 L1541.70 672.10 H1533.10 Z" fill="#FEF5E2" stroke="#4A525C" stroke-width="1" stroke-linejoin="round"/><circle cx="1537.40" cy="680.00" r="7.1" fill="#FDF8E0" stroke="#4A525C" stroke-width="1"/><path d="M1533.80 683.90 A5.3 5.3 0 0 1 1540.60 675.80" stroke="#F8CF55" stroke-width="2.6" fill="none"/><path d="M1537.40 675.60 l1.25 2.55 2.8 0.4 -2.05 1.95 0.5 2.8 -2.5 -1.35 -2.5 1.35 0.5 -2.8 -2.05 -1.95 2.8 -0.4 Z" fill="#fff" stroke="#2F3640" stroke-width="0.9" stroke-linejoin="round"/></svg>
<div style="position:absolute;left:939.00px;top:762.00px;width:628px;height:1px;background:#F0F2F5"></div>
<div style="position:absolute;left:962px;top:715.00px;width:37px;height:37px;border-radius:50%;background:#FCE3EC"></div>
<span style="position:absolute;left:972.20px;top:729.73px;font-size:10.50px;line-height:1;white-space:nowrap;color:#2A3648;-webkit-text-stroke:0.22px #2A3648;">KM</span>
<span style="position:absolute;left:1022.30px;top:719.14px;font-size:13.00px;line-height:1;white-space:nowrap;color:#1E2B40;-webkit-text-stroke:0.22px #1E2B40;letter-spacing:0.630px;">Karl Martinsson</span>
<span style="position:absolute;left:1022.60px;top:736.64px;font-size:13.00px;line-height:1;white-space:nowrap;color:#50565F;letter-spacing:0.358px;">9 closed deals| 65% hit rate</span>
<div style="position:absolute;left:1215.70px;top:718.30px;width:275.30px;height:30.50px;background:#DEFCE3;border-radius:5px;"></div>
<span style="position:absolute;left:1227.30px;top:728.66px;font-size:12.50px;line-height:1;white-space:nowrap;color:#1E2B40;-webkit-text-stroke:0.22px #1E2B40;letter-spacing:0.382px;">$350,000</span>
<svg style="position:absolute;left:0;top:0;" width="1600" height="1072" viewBox="0 0 1600 1072" fill="none"><path d="M1507.80 723.20 H1519.00 L1517.70 729.60 H1509.10 Z" fill="#DDF5FB" stroke="#4A525C" stroke-width="1" stroke-linejoin="round"/><circle cx="1513.40" cy="737.50" r="7.1" fill="#DDF3FA" stroke="#4A525C" stroke-width="1"/><path d="M1509.80 741.40 A5.3 5.3 0 0 1 1516.60 733.30" stroke="#4F6289" stroke-width="2.6" fill="none"/><path d="M1513.40 733.10 l1.25 2.55 2.8 0.4 -2.05 1.95 0.5 2.8 -2.5 -1.35 -2.5 1.35 0.5 -2.8 -2.05 -1.95 2.8 -0.4 Z" fill="#fff" stroke="#2F3640" stroke-width="0.9" stroke-linejoin="round"/></svg>
<div style="position:absolute;left:939.00px;top:819.50px;width:628px;height:1px;background:#F0F2F5"></div>
<div style="position:absolute;left:962px;top:772.50px;width:37px;height:37px;border-radius:50%;background:#F9E0F0"></div>
<span style="position:absolute;left:969.60px;top:787.23px;font-size:10.50px;line-height:1;white-space:nowrap;color:#2A3648;-webkit-text-stroke:0.22px #2A3648;">BDK</span>
<span style="position:absolute;left:1022.30px;top:776.64px;font-size:13.00px;line-height:1;white-space:nowrap;color:#1E2B40;-webkit-text-stroke:0.22px #1E2B40;letter-spacing:0.337px;">Big Daddy Kane</span>
<span style="position:absolute;left:1022.60px;top:794.14px;font-size:13.00px;line-height:1;white-space:nowrap;color:#50565F;letter-spacing:0.358px;">7 closed deals| 42% hit rate</span>
<div style="position:absolute;left:1215.70px;top:775.80px;width:247.50px;height:30.50px;background:#DEFCE3;border-radius:5px;"></div>
<span style="position:absolute;left:1227.30px;top:786.16px;font-size:12.50px;line-height:1;white-space:nowrap;color:#1E2B40;-webkit-text-stroke:0.22px #1E2B40;letter-spacing:0.382px;">$310,000</span>
<svg style="position:absolute;left:0;top:0;" width="1600" height="1072" viewBox="0 0 1600 1072" fill="none"><path d="M1480.00 780.70 H1491.20 L1489.90 787.10 H1481.30 Z" fill="#FCEADB" stroke="#4A525C" stroke-width="1" stroke-linejoin="round"/><circle cx="1485.60" cy="795.00" r="7.1" fill="#FCEBDD" stroke="#4A525C" stroke-width="1"/><path d="M1482.00 798.90 A5.3 5.3 0 0 1 1488.80 790.80" stroke="#A4632A" stroke-width="2.6" fill="none"/><path d="M1485.60 790.60 l1.25 2.55 2.8 0.4 -2.05 1.95 0.5 2.8 -2.5 -1.35 -2.5 1.35 0.5 -2.8 -2.05 -1.95 2.8 -0.4 Z" fill="#fff" stroke="#2F3640" stroke-width="0.9" stroke-linejoin="round"/></svg>
<div style="position:absolute;left:939.00px;top:877.00px;width:628px;height:1px;background:#F0F2F5"></div>
<div style="position:absolute;left:962px;top:830.00px;width:37px;height:37px;border-radius:50%;background:#EEDDF7"></div>
<span style="position:absolute;left:974.00px;top:844.73px;font-size:10.50px;line-height:1;white-space:nowrap;color:#2A3648;-webkit-text-stroke:0.22px #2A3648;">TS</span>
<span style="position:absolute;left:1022.30px;top:834.14px;font-size:13.00px;line-height:1;white-space:nowrap;color:#1E2B40;-webkit-text-stroke:0.22px #1E2B40;letter-spacing:0.439px;">Tupac Shakur</span>
<span style="position:absolute;left:1022.60px;top:851.64px;font-size:13.00px;line-height:1;white-space:nowrap;color:#50565F;letter-spacing:0.358px;">5 closed deals| 33% hit rate</span>
<div style="position:absolute;left:1215.70px;top:833.30px;width:155.00px;height:30.50px;background:#EEF2F7;border-radius:5px;"></div>
<span style="position:absolute;left:1227.30px;top:843.66px;font-size:12.50px;line-height:1;white-space:nowrap;color:#1E2B40;-webkit-text-stroke:0.22px #1E2B40;letter-spacing:0.469px;">$89,000</span>
<div style="position:absolute;left:939.00px;top:934.50px;width:628px;height:1px;background:#F0F2F5"></div>
<div style="position:absolute;left:962px;top:887.50px;width:37px;height:37px;border-radius:50%;background:#E3E0F8"></div>
<span style="position:absolute;left:974.00px;top:902.23px;font-size:10.50px;line-height:1;white-space:nowrap;color:#2A3648;-webkit-text-stroke:0.22px #2A3648;">BS</span>
<span style="position:absolute;left:1022.30px;top:891.64px;font-size:13.00px;line-height:1;white-space:nowrap;color:#1E2B40;-webkit-text-stroke:0.22px #1E2B40;letter-spacing:0.243px;">Biggie Smalls</span>
<span style="position:absolute;left:1022.60px;top:909.14px;font-size:13.00px;line-height:1;white-space:nowrap;color:#50565F;letter-spacing:0.358px;">3 closed deals| 22% hit rate</span>
<div style="position:absolute;left:1215.70px;top:890.80px;width:83.30px;height:30.50px;background:#EEF2F7;border-radius:5px;"></div>
<span style="position:absolute;left:1227.30px;top:901.16px;font-size:12.50px;line-height:1;white-space:nowrap;color:#1E2B40;-webkit-text-stroke:0.22px #1E2B40;letter-spacing:0.469px;">$35,000</span>
<div style="position:absolute;left:962px;top:945.00px;width:37px;height:12px;border-radius:18.5px 18.5px 0 0;background:#E4F5FB"></div>
<span style="position:absolute;left:1022.30px;top:949.14px;font-size:13.00px;line-height:1;white-space:nowrap;color:#8A93A3;-webkit-text-stroke:0.22px #8A93A3;letter-spacing:0.480px;">Johanna Andersson</span>
<div style="position:absolute;left:1215.70px;top:947.00px;width:6.00px;height:12.00px;background:#F2F4F8;border-radius:2px;"></div>
</div>
<div style="position:absolute;left:938px;top:594.5px;width:630px;height:364px;box-sizing:border-box;border:1px solid #EAEDF0;border-radius:6px"></div>
<div style="position:absolute;left:1560.80px;top:647.50px;width:3.30px;height:86.00px;background:#E4E7EC;border-radius:2px;"></div>
<div style="position:absolute;left:62px;top:1018.5px;width:193.5px;height:44.6px;box-sizing:border-box;border:1px solid #EDF0F3;border-radius:7px;background:#FCFCFD"></div>
<div style="position:absolute;left:69px;top:1026px;width:30px;height:30px;border-radius:6px;background:linear-gradient(135deg,#FF8A0C,#FFA236)"></div>
<svg style="position:absolute;left:0;top:0;" width="1600" height="1072" viewBox="0 0 1600 1072" fill="none"><g stroke="#FFF3E0" stroke-width="1.1" stroke-linecap="round" stroke-linejoin="round" fill="none"><path d="M80 1044.6 L88.6 1036 A1.5 1.5 0 0 1 90.7 1038.1 L82.1 1046.7 L79.4 1047.3 Z"/><line x1="87.4" y1="1037.2" x2="89.5" y2="1039.3"/><path d="M78.6 1045.6 Q76.6 1046.6 77.4 1047.8 Q77.8 1048.3 79 1048.3 H89.6"/></g></svg>
<span style="position:absolute;left:107.40px;top:1035.23px;font-size:13.50px;line-height:1;white-space:nowrap;color:#1E2B45;-webkit-text-stroke:0.22px #1E2B45;letter-spacing:0.327px;">Contracts</span>
<svg style="position:absolute;left:0;top:0;" width="1600" height="1072" viewBox="0 0 1600 1072" fill="none"><g stroke="#4A5A78" stroke-width="1.2" stroke-linecap="round" stroke-linejoin="round" fill="none"><polyline points="235.8,1039.5 241.2,1034 246.6,1039.5"/><polyline points="235.8,1043 241.2,1048.4 246.6,1043"/></g></svg>
</div></body></html>
